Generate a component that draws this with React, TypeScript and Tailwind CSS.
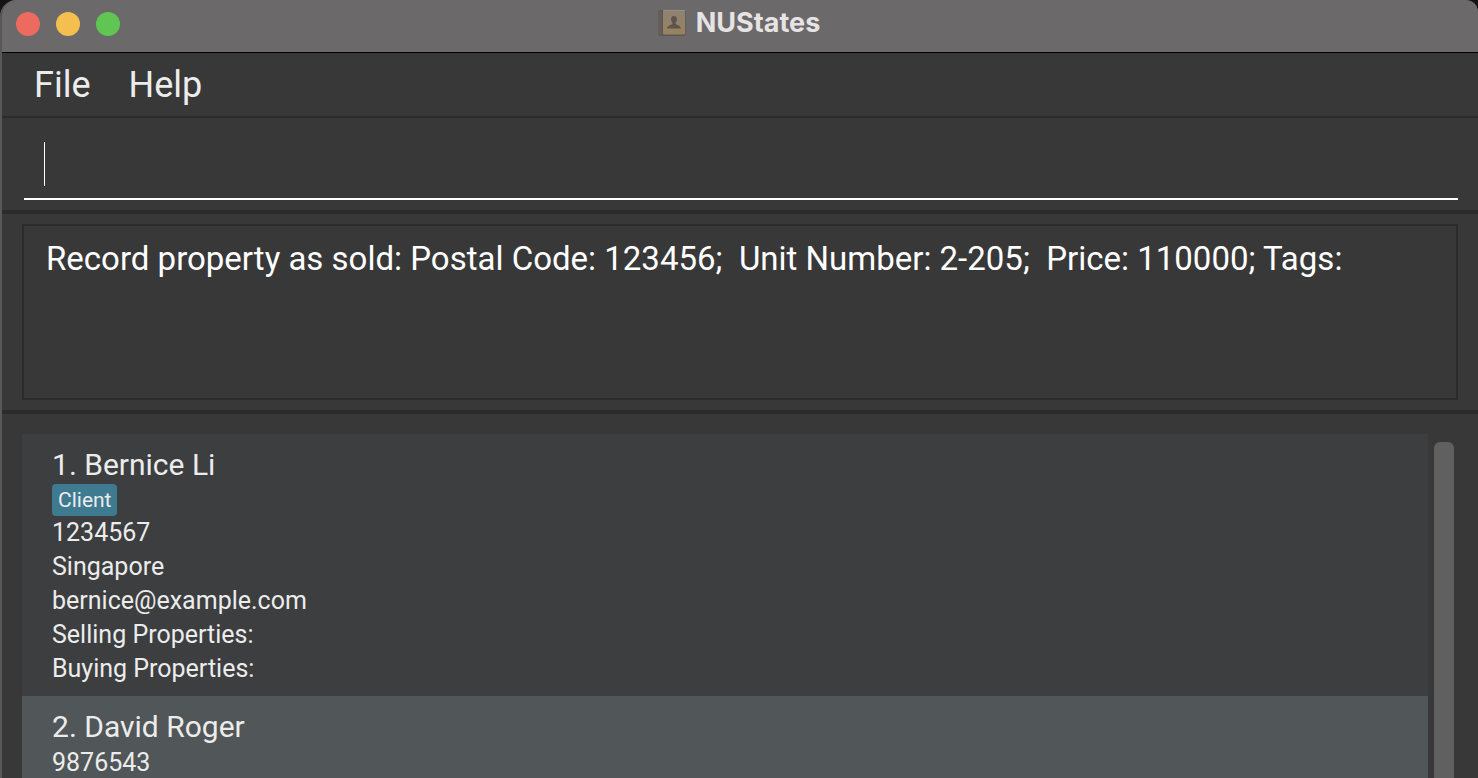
type Person = {
  name: string;
  tags: string[];
  details: string[];
};

const people: Person[] = [
  {
    name: 'Bernice Li',
    tags: ['Client'],
    details: [
      '1234567',
      'Singapore',
      'bernice@example.com',
      'Selling Properties:',
      'Buying Properties:',
    ],
  },
  { name: 'David Roger', tags: [], details: ['9876543'] },
];

const feedback =
  'Record property as sold: Postal Code: 123456;  Unit Number: 2-205;  Price: 110000; Tags:';

function BookIcon() {
  return (
    <svg width="28" height="28" viewBox="0 0 28 28" aria-hidden="true">
      <defs>
        <linearGradient id="cover" x1="0" y1="0" x2="0" y2="1">
          <stop offset="0" stopColor="#8e8272" />
          <stop offset="1" stopColor="#98835f" />
        </linearGradient>
      </defs>
      <rect x="0.5" y="1" width="27" height="26" rx="1.5" fill="#5d5753" />
      <rect x="5" y="2" width="22" height="23.5" rx="1" fill="url(#cover)" />
      <rect x="1" y="1.5" width="3" height="25" rx="1" fill="#665c59" />
      <path d="M5 1.5H27" stroke="#9a8e7c" strokeWidth="1" />
      <path
        d="M16 7c-2 0-3 1.400-3 3.300 0 1.500.6 2.700 1.400 3.400v1.300c-.5.900-4.900 1.200-5.400 4.500h14c-.5-3.300-4.900-3.600-5.400-4.500v-1.300c.8-.7 1.400-1.900 1.400-3.400C19 8.400 18 7 16 7z"
        fill="#5d554d"
      />
    </svg>
  );
}

function TitleBar() {
  return (
    <header className="grid h-[53px] shrink-0 grid-cols-[1fr_auto_1fr] items-start border-b border-black bg-[#6c696a] pr-0.5 pt-2">
      <div className="flex gap-4 pl-3.5 pt-1">
        <button aria-label="Close" className="size-6 rounded-full bg-[#ed6a5e]" />
        <button aria-label="Minimize" className="size-6 rounded-full bg-[#f5bf4f]" />
        <button aria-label="Zoom" className="size-6 rounded-full bg-[#61c554]" />
      </div>
      <div className="flex items-center gap-2.5">
        <BookIcon />
        <h1 className="font-['Inter',sans-serif] text-[27px] leading-[30px] font-bold text-[#e6e3e4]">
          NUStates
        </h1>
      </div>
    </header>
  );
}

function PersonCard({ person, index }: { person: Person; index: number }) {
  return (
    <li className="px-[30px] pt-3 pb-2.5 odd:bg-[#3c3e3f] even:bg-[#515658]">
      <h2 className="text-[30px] leading-[38px]">
        {index + 1}. {person.name}
      </h2>
      {person.tags.length > 0 && (
        <div className="flex gap-2">
          {person.tags.map((tag) => (
            <span
              key={tag}
              className="rounded bg-[#3e7b91] px-1.5 text-[21px] leading-8"
            >
              {tag}
            </span>
          ))}
        </div>
      )}
      {person.details.map((detail) => (
        <p key={detail} className="text-[25px] leading-[34px]">
          {detail}
        </p>
      ))}
    </li>
  );
}

export default function App() {
  return (
    <div className="bg-[#141414]">
      <div className="flex h-screen flex-col overflow-hidden rounded-tl-2xl rounded-tr-xl border-l-2 border-[#585858] bg-[#383838] font-['Roboto',sans-serif] text-[#ececec]">
        <TitleBar />

        <nav className="flex h-[65px] shrink-0 items-center gap-[38px] border-b-2 border-[#2b2b2b] px-8 text-[36px] leading-[44px]">
          <button>File</button>
          <button>Help</button>
        </nav>

        <div className="shrink-0 border-b-4 border-[#2b2b2b] pt-2 pr-5 pb-2.5 pl-[22px]">
          <div className="relative">
            <input
              aria-label="Command"
              className="block h-[74px] w-full border-b-2 border-white bg-transparent px-5 text-[36px] text-white caret-transparent outline-none"
            />
            <span className="pointer-events-none absolute top-4 left-5 h-11 w-px bg-white" />
          </div>
        </div>

        <div className="shrink-0 border-b-4 border-[#2b2b2b] py-2.5 pr-5 pl-5">
          <output className="block h-44 border-2 border-[#2b2b2b] px-[22px] pt-3 text-[33px] leading-[42px] whitespace-pre-wrap text-white">
            {feedback}
          </output>
        </div>

        <main className="flex min-h-0 flex-1 gap-1.5 overflow-hidden pt-5 pr-6 pl-5">
          <ul className="min-w-0 flex-1">
            {people.map((person, index) => (
              <PersonCard key={person.name} person={person} index={index} />
            ))}
          </ul>
          <div className="flex w-5 flex-col pt-2">
            <div className="flex-1 rounded-t-md bg-[#606060]" />
          </div>
        </main>
      </div>
    </div>
  );
}
